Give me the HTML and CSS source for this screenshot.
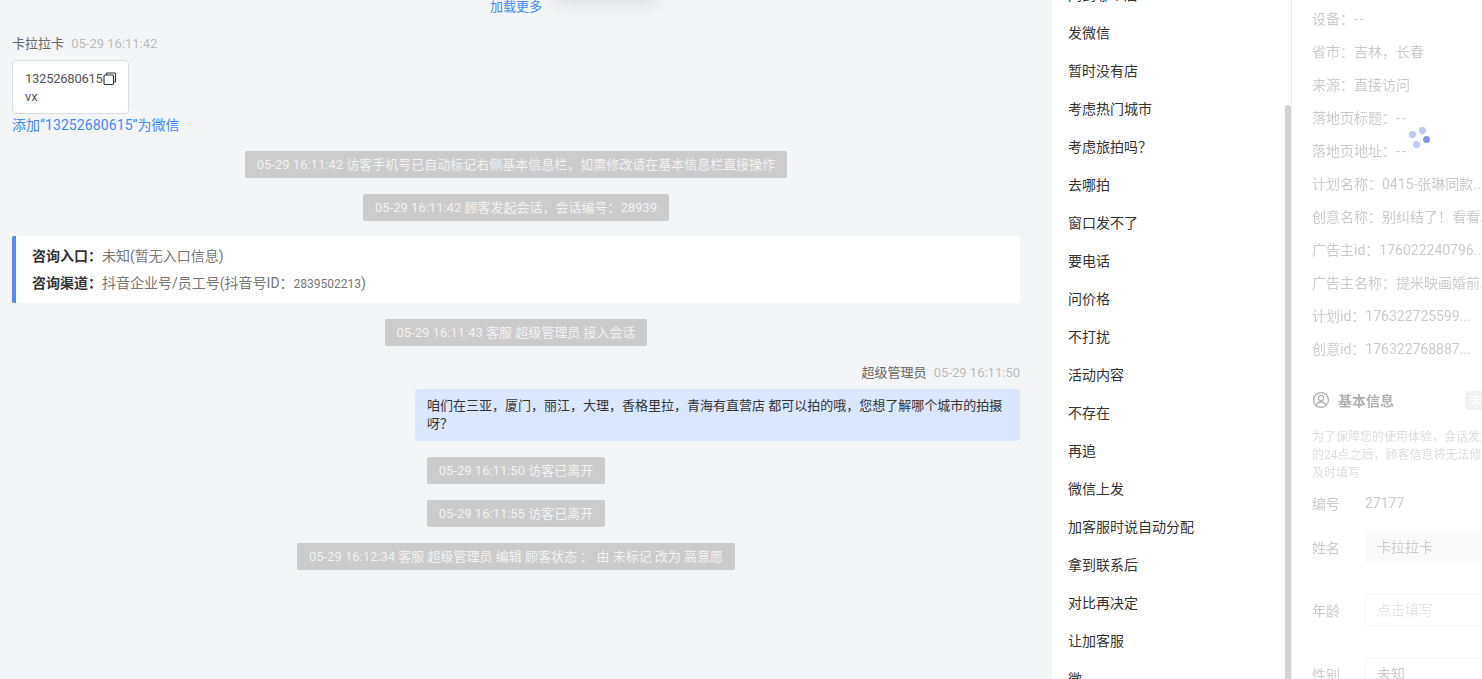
FILE: index.html
```html
<!DOCTYPE html>
<html lang="en">
<head>
    <meta charset="UTF-8">
    <meta name="viewport" content="width=device-width, initial-scale=1.0">
    <title>会话详情</title>
    <link rel="stylesheet" href="styles.css">
</head>
<body>
    <div class="chat-column">
        <div class="toast-shadow"></div>
        <div class="load-more">加载更多</div>

        <div class="msg-head">
            <span class="msg-name">卡拉拉卡</span>
            <span class="msg-time">05-29 16:11:42</span>
        </div>
        <div class="phone-card">
            <div class="phone-line">
                <span class="phone-num">13252680615</span>
                <svg class="copy-icon" width="14" height="14" viewBox="0 0 14 14" fill="none" stroke="#333" stroke-width="1.1">
                    <rect x="1" y="3" width="9.5" height="9.5" rx="1.2"></rect>
                    <path d="M3.5 3V1.8q0-.8.8-.8h7.4q.8 0 .8.8v7.4q0 .8-.8.8h-1.2"></path>
                </svg>
            </div>
            <div>vx</div>
        </div>
        <div class="add-wechat">添加“<span class="phone-num">13252680615</span>”为微信</div>

        <div class="sys-list first">
            <div class="sys-msg">05-29 16:11:42 访客手机号已自动标记右侧基本信息栏，如需修改请在基本信息栏直接操作</div>
            <div class="sys-msg">05-29 16:11:42 顾客发起会话，会话编号：28939</div>
        </div>

        <div class="entry-box">
            <div class="entry-row"><b>咨询入口：</b>未知(暂无入口信息)</div>
            <div class="entry-row"><b>咨询渠道：</b>抖音企业号/员工号(抖音号ID：<span class="entry-id">2839502213</span>)</div>
        </div>

        <div class="sys-list">
            <div class="sys-msg">05-29 16:11:43 客服 超级管理员 接入会话</div>
        </div>

        <div class="msg-head right">
            <span class="msg-name">超级管理员</span>
            <span class="msg-time">05-29 16:11:50</span>
        </div>
        <div class="bubble">咱们在三亚，厦门，丽江，大理，香格里拉，青海有直营店 都可以拍的哦，您想了解哪个城市的拍摄呀？</div>

        <div class="sys-list">
            <div class="sys-msg">05-29 16:11:50 访客已离开</div>
            <div class="sys-msg">05-29 16:11:55 访客已离开</div>
            <div class="sys-msg">05-29 16:12:34 客服 超级管理员 编辑 顾客状态 ： 由 未标记 改为 高意愿</div>
        </div>
    </div>

    <div class="reply-panel">
        <div class="reply-list">
            <div class="reply">问到哪个店</div>
            <div class="reply">发微信</div>
            <div class="reply">暂时没有店</div>
            <div class="reply">考虑热门城市</div>
            <div class="reply">考虑旅拍吗？</div>
            <div class="reply">去哪拍</div>
            <div class="reply">窗口发不了</div>
            <div class="reply">要电话</div>
            <div class="reply">问价格</div>
            <div class="reply">不打扰</div>
            <div class="reply">活动内容</div>
            <div class="reply">不存在</div>
            <div class="reply">再追</div>
            <div class="reply">微信上发</div>
            <div class="reply">加客服时说自动分配</div>
            <div class="reply">拿到联系后</div>
            <div class="reply">对比再决定</div>
            <div class="reply">让加客服</div>
            <div class="reply">微</div>
        </div>
        <div class="reply-scrollbar"></div>
    </div>

    <div class="info-panel">
        <div class="info-blur">
            <div class="info-rows">
                <div class="info-row">设备：<span class="no-value">--</span></div>
                <div class="info-row">省市：吉林，长春</div>
                <div class="info-row">来源：直接访问</div>
                <div class="info-row">落地页标题：<span class="no-value">--</span></div>
                <div class="info-row">落地页地址：<span class="no-value">--</span></div>
                <div class="info-row">计划名称：0415-张琳同款...</div>
                <div class="info-row">创意名称：别纠结了！看看...</div>
                <div class="info-row">广告主id：176022240796...</div>
                <div class="info-row">广告主名称：提米映画婚前...</div>
                <div class="info-row">计划id：176322725599...</div>
                <div class="info-row">创意id：176322768887...</div>
            </div>

            <div class="section-head">
                <svg class="section-icon" width="18" height="18" viewBox="0 0 18 18" fill="none" stroke="#666" stroke-width="1.3">
                    <circle cx="9" cy="9" r="7.4"></circle>
                    <circle cx="9" cy="7" r="2.6"></circle>
                    <path d="M4.6 14q.6-3 4.4-3t4.4 3"></path>
                </svg>
                <span class="section-title">基本信息</span>
                <span class="section-tag">未保存</span>
            </div>
            <div class="section-note">为了保障您的使用体验，会话发生当天<br>的24点之后，顾客信息将无法修改，请<br>及时填写</div>

            <div class="form-row plain"><span class="form-label">编号</span><span class="form-value">27177</span></div>
            <div class="form-row"><span class="form-label">姓名</span><div class="form-input filled">卡拉拉卡</div></div>
            <div class="form-row"><span class="form-label">年龄</span><div class="form-input empty">点击填写</div></div>
            <div class="form-row"><span class="form-label">性别</span><div class="form-input">未知</div></div>
        </div>
        <div class="spinner">
            <i class="dot dot-a"></i>
            <i class="dot dot-b"></i>
            <i class="dot dot-c"></i>
            <i class="dot dot-d"></i>
        </div>
    </div>
</body>
</html>
```

FILE: styles.css
```css
* {
    box-sizing: border-box;
}
html, body {
    height: 100%;
}
body {
    font-family: Roboto, "Noto Sans CJK SC", sans-serif;
    font-size: 13px;
    display: flex;
    height: 100vh;
    margin: 0;
    overflow: hidden;
    background: #f4f5f7;
    color: #333;
}

/* chat column */
.chat-column {
    position: relative;
    width: 1052px;
    flex-shrink: 0;
    padding: 0 32px 0 12px;
    overflow: hidden;
}
.toast-shadow {
    position: absolute;
    left: 555px;
    top: -30px;
    width: 100px;
    height: 30px;
    box-shadow: 0 2px 20px rgba(0, 0, 0, 0.12);
}
.load-more {
    height: 13px;
    line-height: 13px;
    color: #3d8bff;
    text-align: center;
}
.msg-head {
    margin-top: 22px;
    height: 18px;
    line-height: 18px;
    color: #666;
}
.msg-head.right {
    margin-top: 18px;
    text-align: right;
}
.msg-time {
    margin-left: 4px;
    color: #bbb;
}
.phone-card {
    width: 117px;
    height: 54px;
    margin-top: 7px;
    padding: 9px 12px;
    line-height: 18px;
    background: #fff;
    border: 1px solid #ddd;
    border-radius: 4px;
    color: #555;
}
.phone-line {
    display: flex;
    align-items: center;
}
.phone-line .phone-num {
    letter-spacing: -0.25px;
}
.copy-icon {
    flex-shrink: 0;
}
.add-wechat {
    height: 22px;
    line-height: 22px;
    font-size: 14px;
    color: #3d8bff;
}
.add-wechat .phone-num {
    letter-spacing: 0.1px;
}
.sys-list {
    display: flex;
    flex-direction: column;
    align-items: center;
    gap: 16px;
    margin-top: 16px;
}
.sys-list.first {
    margin-top: 15px;
}
.sys-msg {
    height: 27px;
    line-height: 28px;
    padding: 0 12px;
    background: #ccc;
    color: #f2f2f2;
    border-radius: 2px;
    white-space: nowrap;
}
.entry-box {
    margin-top: 15px;
    height: 67px;
    padding: 7px 16px;
    font-size: 14px;
    background: #fff;
    border-left: 4px solid #4d8bff;
    border-radius: 2px;
    color: #777;
}
.entry-row {
    height: 27px;
    line-height: 27px;
}
.entry-row b {
    color: #333;
}
.entry-id {
    font-size: 12px;
}
.bubble {
    width: 605px;
    margin: 7px 0 0 auto;
    padding: 8px 12px;
    line-height: 18px;
    background: #dbe7ff;
    border-radius: 4px;
    color: #333;
}

/* quick replies */
.reply-panel {
    position: relative;
    width: 240px;
    flex-shrink: 0;
    background: #fff;
    border-right: 1px solid #eee;
    overflow: hidden;
}
.reply-list {
    margin-top: -24px;
}
.reply {
    height: 38px;
    line-height: 38px;
    padding-left: 16px;
    font-size: 14px;
    color: #333;
    white-space: nowrap;
}
.reply-scrollbar {
    position: absolute;
    right: 0;
    top: 105px;
    bottom: 0;
    width: 6px;
    background: #d4d4d4;
    border-radius: 3px 3px 0 0;
}

/* customer info, blurred while loading */
.info-panel {
    position: relative;
    flex: 1;
    min-width: 0;
    background: #fff;
    overflow: hidden;
}
.info-blur {
    width: 100%;
    padding-left: 20px;
    font-size: 14px;
    opacity: 0.5;
    filter: blur(0.5px);
}
.info-rows {
    margin-top: 3px;
}
.info-row {
    height: 33px;
    line-height: 33px;
    color: #999;
    white-space: nowrap;
}
.no-value {
    letter-spacing: 2px;
}
.section-head {
    display: flex;
    align-items: center;
    margin-top: 22px;
    height: 24px;
    white-space: nowrap;
}
.section-icon {
    flex-shrink: 0;
}
.section-title {
    margin-left: 8px;
    font-weight: 700;
    color: #666;
}
.section-tag {
    margin-left: 71px;
    padding: 0 4px;
    height: 19px;
    line-height: 19px;
    background: #e6e6e6;
    color: #fff;
    border-radius: 2px;
}
.section-note {
    margin-top: 16px;
    font-size: 12px;
    line-height: 18px;
    color: #bbb;
    white-space: nowrap;
}
.form-row {
    display: flex;
    align-items: center;
    margin-top: 31px;
    height: 32px;
    color: #999;
    white-space: nowrap;
}
.form-row:last-child {
    margin-top: 32px;
}
.form-row.plain {
    margin-top: 11px;
    height: 20px;
}
.form-row.plain + .form-row {
    margin-top: 18px;
}
.form-label {
    width: 53px;
    flex-shrink: 0;
}
.form-input {
    width: 140px;
    height: 32px;
    line-height: 30px;
    padding-left: 11px;
    border: 1px solid #eee;
    border-radius: 2px;
    flex-shrink: 0;
}
.form-input.filled {
    background: #f7f7f7;
    border-color: #f7f7f7;
}
.form-input.empty {
    color: #ccc;
}

/* loading spinner */
.spinner {
    position: absolute;
    left: 115px;
    top: 126px;
    width: 24px;
    height: 24px;
}
.dot {
    position: absolute;
    width: 7px;
    height: 7px;
    border-radius: 50%;
    background: #bccafa;
}
.dot-a { left: 2px; top: 5px; }
.dot-b { left: 12px; top: 1px; }
.dot-c { left: 16px; top: 10px; background: #7f98ee; }
.dot-d { left: 6px; top: 15px; }
```
